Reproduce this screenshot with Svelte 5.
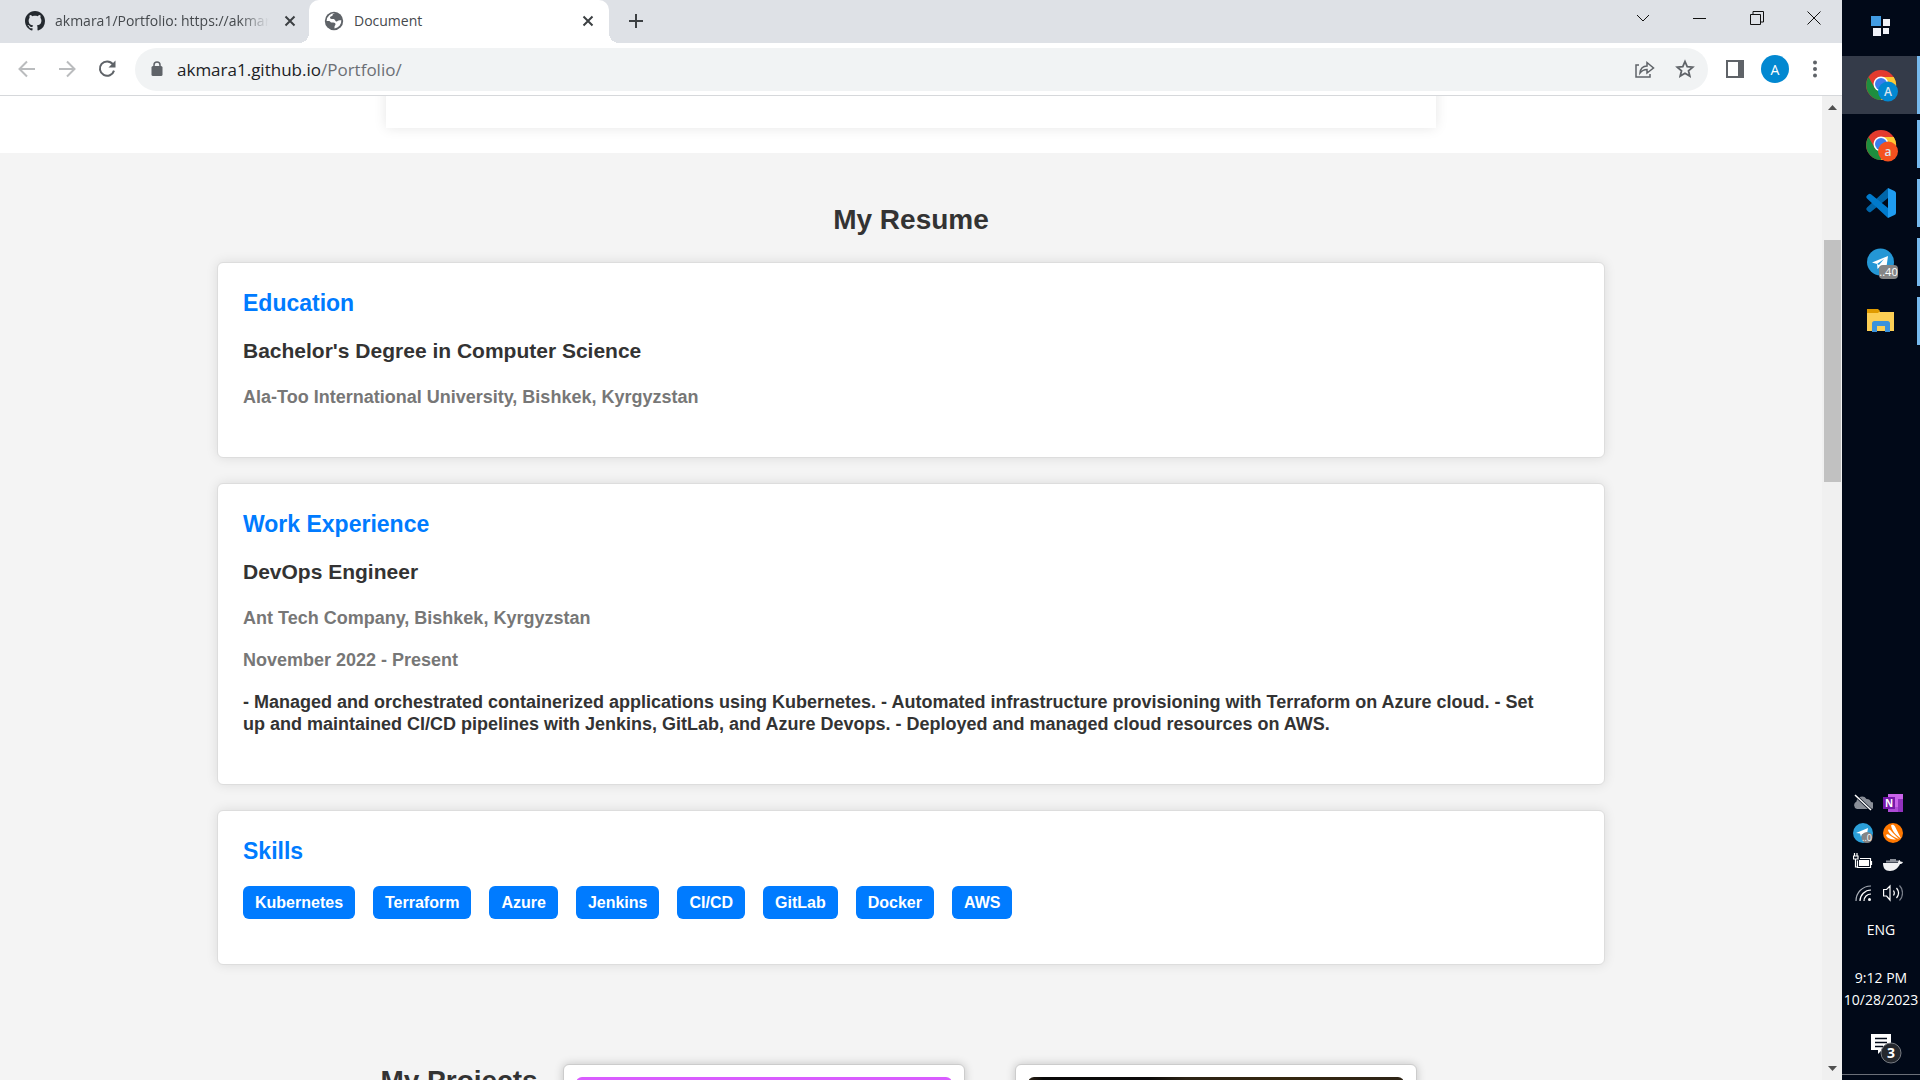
<script>
  const skills = ['Kubernetes', 'Terraform', 'Azure', 'Jenkins', 'CI/CD', 'GitLab', 'Docker', 'AWS'];
</script>

{#snippet cross()}
  <svg width="12" height="12" viewBox="0 0 12 12"><path d="M1.5 1.5l9 9M10.5 1.5l-9 9" stroke="#3c4043" stroke-width="2" fill="none" /></svg>
{/snippet}

{#snippet chrome(color, letter)}
  <svg width="34" height="34" viewBox="0 0 34 34">
    <circle cx="16" cy="17" r="15" fill="#e33b2e" />
    <path d="M16 9H28.700A15 15 0 0 1 16 32L22 20.500Z" fill="#fcc934" />
    <path d="M3.500 9L10 20.500L16 24H19L15.500 32A15 15 0 0 1 3.500 9Z" fill="#1e8e3e" />
    <circle cx="16" cy="16" r="7.5" fill="#fff" />
    <circle cx="16" cy="16" r="6" fill="#3b7ded" />
    <circle cx="23" cy="23.5" r="10" fill={color} />
    <text x="23" y="28" text-anchor="middle" font-size="12" fill="#d8e6f0" font-weight="600">{letter}</text>
  </svg>
{/snippet}

<div class="screen">
  <div class="browser">
    <header class="tabs">
      <div class="tab">
        <svg class="fav" width="20" height="20" viewBox="0 0 16 16"><path fill="#24292f" d="M8 0C3.58 0 0 3.58 0 8c0 3.54 2.29 6.53 5.47 7.59.4.07.55-.17.55-.38 0-.19-.01-.82-.01-1.49-2.01.37-2.53-.49-2.69-.94-.09-.23-.48-.94-.82-1.13-.28-.15-.68-.52-.01-.53.63-.01 1.08.58 1.23.82.72 1.21 1.87.87 2.33.66.07-.52.28-.87.51-1.07-1.78-.2-3.64-.89-3.64-3.95 0-.87.31-1.59.82-2.15-.08-.2-.36-1.02.08-2.12 0 0 .67-.21 2.2.82.64-.18 1.32-.27 2-.27s1.36.09 2 .27c1.53-1.04 2.2-.82 2.2-.82.44 1.1.16 1.92.08 2.12.51.56.82 1.27.82 2.15 0 3.07-1.87 3.75-3.65 3.95.29.25.54.73.54 1.48 0 1.07-.01 1.93-.01 2.2 0 .21.15.46.55.38A8.01 8.01 0 0 0 16 8c0-4.42-3.58-8-8-8z" /></svg>
        <span class="title fade">akmara1/Portfolio: https://akmara1.github.io</span>
        <button aria-label="Close tab">{@render cross()}</button>
      </div>
      <div class="tab active">
        <svg class="fav" width="20" height="20" viewBox="0 0 20 20"><circle cx="10" cy="10" r="9.2" fill="#5f6368" /><path d="M11.5 2.5c-2 0-3 .5-3 2 0 1-2.500.6-2.500 2 0 1.200 1 1.500 3 1.500 2.500 0 2 2.500 3.500 2.500 1.200 0 1.500-1.200 3-1.200h1.800A7.500 7.500 0 0 1 10.500 17.400v-1.600c0-1.500 1-1.300 1-2.500 0-1.500-1.600-1.700-4-1.700-1.500 0-1-1.600-2.500-1.600H2.600A7.500 7.500 0 0 1 11.500 2.500z" fill="#fff" /><path d="M12 3c1 1.500 3 1 3 2.500S13 7 12.500 8" stroke="#5f6368" stroke-width="1" fill="none" /></svg>
        <span class="title">Document</span>
        <button aria-label="Close tab">{@render cross()}</button>
      </div>
      <button class="new" aria-label="New tab"><svg width="16" height="16" viewBox="0 0 16 16"><path d="M8 1v14M1 8h14" stroke="#3c4043" stroke-width="2" /></svg></button>
      <div class="controls">
        <button aria-label="Search tabs"><svg width="14" height="14" viewBox="0 0 14 14"><path d="M1 4l6 6 6-6" /></svg></button>
        <button aria-label="Minimize"><svg width="14" height="14" viewBox="0 0 14 14"><path d="M0 7.500h13" /></svg></button>
        <button aria-label="Restore"><svg width="14" height="14" viewBox="0 0 14 14"><path d="M.5 3.500h10v10H.5zM3 3.500v-3h10.500v10.500h-3" /></svg></button>
        <button aria-label="Close"><svg width="14" height="14" viewBox="0 0 14 14"><path d="M.5.5l13 13M13.500.5l-13 13" /></svg></button>
      </div>
    </header>

    <nav class="toolbar">
      <button aria-label="Back"><svg width="18" height="18" viewBox="0 0 18 18"><path d="M17 9H2M9 1.500L1.500 9 9 16.500" fill="none" stroke="#babcbe" stroke-width="2" /></svg></button>
      <button aria-label="Forward"><svg width="18" height="18" viewBox="0 0 18 18"><path d="M1 9h15M9 1.500L16.500 9 9 16.500" fill="none" stroke="#babcbe" stroke-width="2" /></svg></button>
      <button aria-label="Reload"><svg width="18" height="18" viewBox="0 0 18 18"><path d="M14.800 4.200A7.200 7.200 0 1 0 16 10.600" fill="none" stroke="#5f6368" stroke-width="2" /><path d="M17.500 0.500v7h-7z" fill="#5f6368" /></svg></button>
      <div class="omnibox">
        <svg width="12" height="16" viewBox="0 0 12 16"><rect x="0.500" y="5" width="11" height="10" rx="1.500" fill="#5f6368" /><path d="M3 6V4a3 3 0 0 1 6 0v2" fill="none" stroke="#5f6368" stroke-width="1.500" /></svg>
        <a class="url" href="#top">akmara1.github.io<span>/Portfolio/</span></a>
        <button aria-label="Share"><svg width="20" height="18" viewBox="0 0 20 18"><path d="M4 5H1v12h14v-3M5 13c.5-4.500 3-7 7-7V2.500L18.500 8 12 13V9.500c-3 0-5 1-7 3.500z" fill="none" stroke="#5f6368" stroke-width="1.500" /></svg></button>
        <button aria-label="Bookmark"><svg width="20" height="20" viewBox="0 0 20 20"><path d="M10 2.500l2.200 5.100 5.500.5-4.200 3.600 1.300 5.400L10 14.200l-4.800 2.900 1.300-5.400L2.300 8.100l5.500-.5z" fill="none" stroke="#5f6368" stroke-width="1.800" /></svg></button>
      </div>
      <button aria-label="Side panel"><svg width="18" height="18" viewBox="0 0 18 18"><path d="M0 0h18v18H0zM2 2v14h10V2z" fill="#5f6368" fill-rule="evenodd" /></svg></button>
      <button class="avatar" aria-label="Profile">A</button>
      <button aria-label="Menu"><svg width="4" height="18" viewBox="0 0 4 18" fill="#5f6368"><circle cx="2" cy="2.500" r="2" /><circle cx="2" cy="9" r="2" /><circle cx="2" cy="15.500" r="2" /></svg></button>
    </nav>

    <div class="view">
      <main>
        <div class="intro"><div class="sheet"></div></div>
        <section class="resume">
          <h2>My Resume</h2>
          <article>
            <h3>Education</h3>
            <h4>Bachelor's Degree in Computer Science</h4>
            <p class="muted">Ala-Too International University, Bishkek, Kyrgyzstan</p>
          </article>
          <article>
            <h3>Work Experience</h3>
            <h4>DevOps Engineer</h4>
            <p class="muted">Ant Tech Company, Bishkek, Kyrgyzstan</p>
            <p class="muted">November 2022 - Present</p>
            <p class="duties">- Managed and orchestrated containerized applications using Kubernetes. - Automated infrastructure provisioning with Terraform on Azure cloud. - Set up and maintained CI/CD pipelines with Jenkins, GitLab, and Azure Devops. - Deployed and managed cloud resources on AWS.</p>
          </article>
          <article>
            <h3>Skills</h3>
            <ul>
              {#each skills as skill}<li>{skill}</li>{/each}
            </ul>
          </article>
        </section>
        <section class="projects">
          <h2>My Projects</h2>
          <div class="project"><div class="cover pink"></div></div>
          <div class="project"><div class="cover dark"></div></div>
        </section>
      </main>
      <div class="scrollbar">
        <svg width="20" height="20" viewBox="0 0 20 20"><path d="M6 14l4.500-5 4.500 5z" fill="#505050" /></svg>
        <div class="before"></div>
        <div class="thumb"></div>
        <div class="after"></div>
        <svg width="20" height="20" viewBox="0 0 20 20"><path d="M6 6l4.500 5 4.500-5z" fill="#505050" /></svg>
      </div>
    </div>
  </div>

  <aside class="taskbar">
    <button class="start" aria-label="Start"><svg width="20" height="20" viewBox="0 0 20 20"><path d="M0 0h10v10H0z" fill="#429ce3" /><path d="M12 3h7v7h-7zM2 12h8v8H2zM12 12h6v6h-6z" fill="#f0f2f8" /></svg></button>
    <button class="app current" aria-label="Chrome, profile A">{@render chrome('#0288d1', 'A')}</button>
    <button class="app" aria-label="Chrome, profile a">{@render chrome('#f4511e', 'a')}</button>
    <button class="app" aria-label="Visual Studio Code"><svg width="34" height="34" viewBox="0 0 34 34">
      <path d="M23 1L2 20.500a2 2 0 0 0 0 3l1.500 1.200a2 2 0 0 0 2.500 0L23 11z" fill="#0065a9" />
      <path d="M23 31L2 11.500a2 2 0 0 1 0-3l1.500-1.200a2 2 0 0 1 2.500 0L23 21z" fill="#007acc" />
      <path d="M23 1l6.500 3a2.500 2.500 0 0 1 1.500 2.300v19.400a2.500 2.500 0 0 1-1.500 2.300L23 31z" fill="#1f9cf0" />
    </svg></button>
    <button class="app" aria-label="Telegram"><svg width="34" height="34" viewBox="0 0 34 34">
      <circle cx="15.500" cy="16" r="13.500" fill="#2497d5" />
      <path d="M7 16.500L23 10l-2 14-5.500-4-3 3-.5-5z" fill="#fff" /><path d="M12 18l7-5-5 6z" fill="#2497d5" />
      <rect x="14" y="19" width="19" height="14" rx="4" fill="#858585" />
      <text x="23.500" y="30" text-anchor="middle" font-size="11" fill="#fff">..40</text>
    </svg></button>
    <button class="app" aria-label="File Explorer"><svg width="34" height="34" viewBox="0 0 34 34">
      <path d="M2 5h11l2 2h14v19H2z" fill="#fccf55" /><path d="M2 4h11l2 2-2 2H2z" fill="#e09b00" />
      <path d="M7 27V18.500a2.500 2.500 0 0 1 2.500-2.500h13A2.500 2.500 0 0 1 25 18.500V27h-5v-6h-8v6z" fill="#3b92dc" />
    </svg></button>

    <div class="tray">
      <svg width="20" height="20" viewBox="0 0 20 20"><path d="M4 16a4 4 0 0 1-.5-7.500A5.500 5.500 0 0 1 13.500 6 4.500 4.500 0 0 1 18 9a3.500 3.500 0 0 1 0 7z" fill="#8a8f98" /><path d="M3 3l16 15" stroke="#010918" stroke-width="3" /><path d="M2 2l16 15" stroke="#fff" stroke-width="1.500" /></svg>
      <svg width="20" height="20" viewBox="0 0 20 20"><path d="M5 1h15v18H5z" fill="#ca64ea" /><path d="M15 6h5v13h-5z" fill="#9332bf" /><path d="M5 14h10v5H5z" fill="#ae4bd5" /><path d="M0 4h12v12H0z" fill="#7719aa" /><text x="6" y="14" text-anchor="middle" font-size="10" font-weight="700" fill="#fff">N</text></svg>
      <svg width="20" height="20" viewBox="0 0 20 20"><circle cx="10" cy="10" r="10" fill="#2b9fd9" /><path d="M3 10l12-5-1 6-5 0-1 3-1-3.500z" fill="#fff" /><circle cx="14" cy="14.500" r="5.500" fill="#858585" /><text x="14" y="18" text-anchor="middle" font-size="9" fill="#fff">..0</text></svg>
      <svg width="20" height="20" viewBox="0 0 20 20"><circle cx="10" cy="10" r="10" fill="#ff7800" /><path d="M8 2.500c1-1.500 3-1 4 1l6 12c-6-4-9-8-10-13zM5 7c1.500-1 2.500 0 4 2l7 7C10 14 6 11 5 7zM3 12c1-1 2-1 4 .5l6 4C8 16.500 4 15.500 3 12z" fill="#fff" /></svg>
      <svg width="20" height="20" viewBox="0 0 20 20"><path d="M4.500 7.500v7h13v-9H7M18.500 8v4M1.500 0v3M4 0v3M.5 3h4.500v3H.5zM2.500 6v8h2" fill="none" stroke="#fff" stroke-width="1.200" /><path d="M6 7h10v6H6z" fill="#fff" /></svg>
      <svg width="20" height="20" viewBox="0 0 20 20"><path d="M0 10h15c0-2 .5-3 1.500-3l1 1.500 2.500.5c-1 2-2 2-3 2C15 15 12 18 7 18S0 15 0 10z" fill="#f0f1f3" /><path d="M3 8.500h12M7 7h6" stroke="#8d929b" stroke-width="2" /></svg>
      <svg width="20" height="20" viewBox="0 0 20 20" fill="none" stroke="#fff" stroke-width="1.200"><path d="M3 18C3 10 9 3 18 3" stroke="#aaafb8" /><path d="M7 18C7 12 12 7 18 7M11 18c0-4 3-7 7-7" /><circle cx="16.500" cy="16.500" r="1.500" fill="#fff" stroke="none" /></svg>
      <svg width="20" height="20" viewBox="0 0 20 20" fill="none" stroke="#fff" stroke-width="1.200"><path d="M.6 6.500h3L7 3v14l-3.400-4H.6zM10.500 7.500c1 1.500 1 3.500 0 5M13.500 5c2.500 3 2.500 7 0 10" /><path d="M16.500 2.500c4 4 4 11 0 15" stroke="#777d88" /></svg>
    </div>
    <div class="lang">ENG</div>
    <div class="clock">9:12 PM<br />10/28/2023</div>
    <button class="notes" aria-label="3 notifications"><svg width="32" height="32" viewBox="0 0 32 32">
      <path d="M1 1h20v16H12l-4 4v-4H1z" fill="#fff" /><path d="M5 5.500h12M5 9.500h12M5 13.500h8" stroke="#010918" stroke-width="1.500" />
      <circle cx="21" cy="20" r="10" fill="#25282e" stroke="#777b82" stroke-width="1" />
      <text x="21" y="25" text-anchor="middle" font-size="14" font-weight="700" fill="#fff">3</text>
    </svg></button>
    <div class="desktop"></div>
  </aside>
</div>

<style>
  :global(body) { margin: 0; }
  .screen { display: flex; height: 100vh; overflow: hidden; font-family: "Open Sans", "Noto Sans", sans-serif; }
  .screen * { box-sizing: border-box; }
  svg { display: block; flex: none; }
  button { border: 0; background: none; padding: 0; font: inherit; color: inherit; display: flex; align-items: center; justify-content: center; flex: none; }
  .browser { flex: 1; min-width: 0; display: flex; flex-direction: column; background: #fff; }

  .tabs { flex: none; display: flex; height: 43px; background: #dee1e6; color: #45494d; font-size: 14px; }
  .tab { display: flex; align-items: center; width: 300px; padding: 0 15px 2px; gap: 10px; }
  .tab:first-child { width: 309px; padding-left: 25px; padding-right: 13px; }
  .title { flex: 1; white-space: nowrap; overflow: hidden; }
  .fade { margin-right: 5px; mask-image: linear-gradient(90deg, #000 86%, transparent); }
  .active { position: relative; background: #fff; border-radius: 10px 10px 0 0; }
  .active::before, .active::after { content: ""; position: absolute; bottom: 0; width: 10px; height: 10px; }
  .active::before { right: 100%; background: radial-gradient(circle at 0 0, transparent 10px, #fff 10px); }
  .active::after { left: 100%; background: radial-gradient(circle at 100% 0, transparent 10px, #fff 10px); }
  .new { width: 54px; padding-bottom: 1px; }
  .controls { margin-left: auto; display: flex; height: 36px; }
  .controls button { width: 57px; }
  .controls path { fill: none; stroke: #111; stroke-width: 1; }

  .toolbar { flex: none; display: flex; align-items: center; height: 53px; padding: 0 7px; border-bottom: 1px solid #d6d8db; }
  .toolbar > button { width: 40px; height: 40px; }
  .omnibox { flex: 1; display: flex; align-items: center; height: 43px; margin: 0 7px 0 8px; padding: 0 13px 0 16px; border-radius: 22px; background: #f1f3f4; }
  .url { flex: 1; margin-left: 14px; color: #202124; font-size: 17px; text-decoration: none; }
  .url span { color: #6b6f74; }
  .omnibox button { width: 20px; margin-left: 20px; }
  .toolbar > .avatar { width: 28px; height: 28px; margin: 0 6px; border-radius: 50%; background: #0288d1; color: #fff; font-size: 14px; }

  .view { flex: 1; min-height: 0; display: flex; }
  main { flex: 1; min-width: 0; overflow: hidden; background: #f4f4f4; color: #333; font-family: "Liberation Sans", Arial, sans-serif; font-weight: 700; }
  .intro { height: 57px; padding: 0 386px; overflow: hidden; background: #fff; }
  .sheet { height: 52px; margin-top: -20px; box-shadow: 0 0 12px rgba(0, 0, 0, 0.1); }
  h2, h3, h4, p, ul { margin: 0; padding: 0; }
  h2 { font-size: 28px; line-height: 34px; }
  .resume { display: flex; flex-direction: column; gap: 25px; padding: 50px 217px 99px; }
  .resume h2 { text-align: center; }
  article { padding: 25px 25px 49px; border: 1px solid #ddd; border-radius: 6px; background: #fff; box-shadow: 0 0 12px rgba(0, 0, 0, 0.1); }
  h3 { margin-bottom: 20px; color: #007bff; font-size: 23px; line-height: 30px; }
  h4 { margin-bottom: 22px; font-size: 21px; line-height: 26px; }
  p { font-size: 18px; line-height: 22px; }
  p + p { margin-top: 20px; }
  .muted { color: #777; }
  .duties { padding-right: 30px; }
  ul { display: flex; gap: 18px; list-style: none; }
  li { padding: 0 12px; border-radius: 6px; background: #007bff; color: #fff; font-size: 16px; line-height: 33px; }
  article:last-child { padding-bottom: 45px; }
  .projects { display: flex; justify-content: center; align-items: flex-start; padding-right: 25px; padding-left: 25px; }
  .projects h2 { margin-right: 25px; margin-left: -25px; }
  .project { width: 402px; height: 300px; padding: 12px; border: 1px solid #ccc; border-radius: 6px; background: #fff; box-shadow: 0 0 10px rgba(0, 0, 0, 0.2); }
  .project + .project { margin-left: 50px; }
  .cover { height: 200px; border-radius: 6px; }
  .pink { background: #d95cff; }
  .dark { background: linear-gradient(90deg, #2e2417, #0a0909 4%, #0d0b0a 32%, #2c2315 42%, #35270f 68%, #2e2417); }

  .scrollbar { flex: none; width: 20px; display: flex; flex-direction: column; background: #f0f0f0; }
  .before { flex: 124; }
  .thumb { flex: 242; margin: 0 1px 0 2px; background: #c1c1c1; }
  .after { flex: 578; }

  .taskbar { flex: none; width: 78px; display: flex; flex-direction: column; background: #010918; color: #fff; font-size: 14px; }
  .start { height: 56px; padding-bottom: 4px; }
  .app { height: 59px; border-right: 3px solid transparent; border-image: linear-gradient(transparent 5px, #76b9ed 5px, #76b9ed 53px, transparent 53px) 0 3 0 0; border-width: 0 3px 0 0; padding-left: 5px; }
  .app.current { height: 58px; margin-bottom: 1px; background: #343b49; border-image: none; border-color: #76b9ed; }
  .tray { margin-top: auto; display: grid; grid-template-columns: 20px 20px; gap: 10px; justify-content: center; padding-right: 6px; }
  .lang { margin-top: 16px; line-height: 22px; text-align: center; }
  .clock { margin-top: 26px; line-height: 22px; text-align: center; white-space: nowrap; }
  .notes { height: 32px; margin-top: 22px; padding-left: 10px; }
  .desktop { height: 6px; margin-top: 9px; border-top: 1px solid #6b6f78; }
</style>
